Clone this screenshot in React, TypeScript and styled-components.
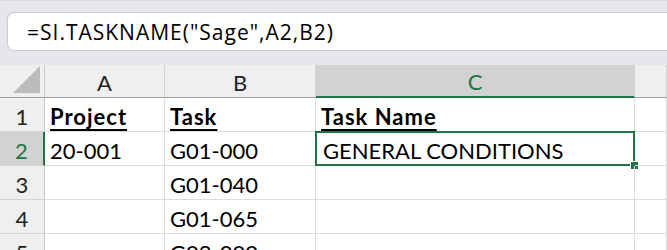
import React from "react";
import styled, {createGlobalStyle, css} from "styled-components";

const GlobalStyle = createGlobalStyle`
    html, body {
        margin: 0;
        padding: 0;
        background: #fff;
        overflow: hidden;
    }
    body {
        font-family: 'Lato', 'Liberation Sans', sans-serif;
        color: #000;
    }
`;

const Page = styled.div`
    display: flex;
    flex-direction: column;
    width: 667px;
    height: 250px;
    overflow: hidden;
`;

const FormulaBar = styled.div`
    display: flex;
    padding: 11px 0 14px 7px;
    background: #e5e7ec;
    border-top: 1px solid #d8dae0;
`;

const FormulaBox = styled.div`
    display: flex;
    align-items: center;
    flex: 1;
    height: 37px;
    padding-left: 19px;
    background: #fff;
    border: 1px solid #c9cbd1;
    border-right: none;
    border-radius: 7px 0 0 7px;
    font-family: 'Open Sans', 'Liberation Sans', sans-serif;
    font-size: 21px;
    letter-spacing: 1px;
    color: #000;
    white-space: nowrap;
`;

const Sheet = styled.div`
    display: grid;
    grid-template-columns: 45px 120px 151px 319px 1fr;
    grid-template-rows: 33px repeat(5, 34px);
`;

const Corner = styled.div`
    position: relative;
    background: #efefef;
    border-right: 1px solid #c6c6c6;
    border-bottom: 1px solid #9e9e9e;
    box-sizing: border-box;

    &::after {
        content: "";
        position: absolute;
        right: 4px;
        bottom: 4px;
        width: 0;
        height: 0;
        border-left: 27px solid transparent;
        border-bottom: 27px solid #bcbcbc;
    }
`;

const ColHead = styled.div<{ $active?: boolean }>`
    display: flex;
    align-items: center;
    justify-content: center;
    box-sizing: border-box;
    background: #efefef;
    border-right: 1px solid #d4d4d4;
    border-bottom: 1px solid #9e9e9e;
    font-size: 22px;
    padding-top: 2px;
    color: #222;
    ${p => p.$active && css`
        background: #d2d2d2;
        color: #217346;
        border-bottom: 2px solid #217346;
    `}
`;

const RowHead = styled.div<{ $active?: boolean }>`
    display: flex;
    align-items: center;
    justify-content: center;
    box-sizing: border-box;
    background: #efefef;
    border-right: 1px solid #c6c6c6;
    border-bottom: 1px solid #d4d4d4;
    font-size: 22px;
    padding-top: 3px;
    color: #222;
    ${p => p.$active && css`
        background: #d2d2d2;
        color: #217346;
        border-right: 2px solid #217346;
    `}
`;

const Cell = styled.div<{ $bold?: boolean; $selected?: boolean }>`
    position: relative;
    display: flex;
    align-items: center;
    box-sizing: border-box;
    padding: 3px 0 0 5px;
    border-right: 1px solid #dcdcdc;
    border-bottom: 1px solid #dcdcdc;
    font-size: 22px;
    white-space: nowrap;
    ${p => p.$bold && css`
        font-weight: 700;
        letter-spacing: 1px;
        text-decoration: underline;
        text-decoration-thickness: 2px;
        text-underline-offset: 4px;
    `}
    ${p => p.$selected && css`
        margin: -1px 0 0 -1px;
        padding-left: 6px;
        border: 2px solid #217346;
    `}
`;

const FillHandle = styled.span`
    position: absolute;
    right: -5px;
    bottom: -5px;
    width: 7px;
    height: 7px;
    background: #217346;
    border-left: 1px solid #fff;
    border-top: 1px solid #fff;
`;

const cols = ["A", "B", "C", ""];

const rows: string[][] = [
    ["Project", "Task", "Task Name", ""],
    ["20-001", "G01-000", "GENERAL CONDITIONS", ""],
    ["", "G01-040", "", ""],
    ["", "G01-065", "", ""],
    ["", "G02-000", "", ""],
];

const App = () => {
    return (
        <Page>
            <GlobalStyle />
            <FormulaBar>
                <FormulaBox>=SI.TASKNAME("Sage",A2,B2)</FormulaBox>
            </FormulaBar>
            <Sheet>
                <Corner />
                {cols.map((c, i) => (
                    <ColHead key={i} $active={c === "C"}>{c}</ColHead>
                ))}
                {rows.map((r, ri) => (
                    <React.Fragment key={ri}>
                        <RowHead $active={ri === 1}>{ri + 1}</RowHead>
                        {r.map((v, ci) => {
                            const selected = ri === 1 && ci === 2;
                            return (
                                <Cell key={ci} $bold={ri === 0 && v !== ""} $selected={selected}>
                                    {v}
                                    {selected && <FillHandle />}
                                </Cell>
                            );
                        })}
                    </React.Fragment>
                ))}
            </Sheet>
        </Page>
    );
};

export default App;
